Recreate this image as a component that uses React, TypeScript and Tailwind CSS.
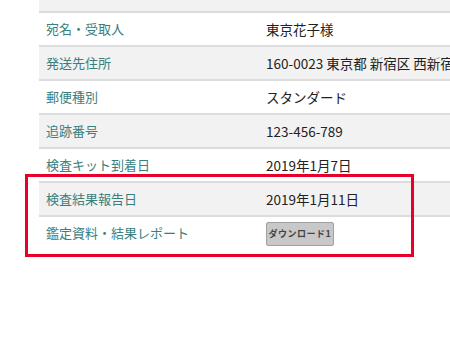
type Row = {
  label: string
  value?: string
  shaded: boolean
}

const rows: Row[] = [
  { label: '宛名・受取人', value: '東京花子様', shaded: false },
  { label: '発送先住所', value: '160-0023 東京都 新宿区 西新宿 1-1-1', shaded: true },
  { label: '郵便種別', value: 'スタンダード', shaded: false },
  { label: '追跡番号', value: '123-456-789', shaded: true },
  { label: '検査キット到着日', value: '2019年1月7日', shaded: false },
  { label: '検査結果報告日', value: '2019年1月11日', shaded: true },
]

const font = { fontFamily: '"Noto Sans CJK JP", "Noto Sans", sans-serif' }

const InfoRow = ({ label, value, shaded }: Row) => (
  <div
    className={`flex border-t-2 border-[#dcdcdc] h-[34px] items-center ${shaded ? 'bg-[#f2f2f2]' : 'bg-white'}`}
  >
    <div className="w-[227px] shrink-0 pl-[7px] text-[13px] text-[#3a7f7e]">{label}</div>
    <div className="whitespace-nowrap text-[13.5px] text-[#222]">{value}</div>
  </div>
)

export default function App() {
  return (
    <div className="relative w-[450px] h-[350px] overflow-hidden bg-white" style={font}>
      <div className="ml-[39px] w-[600px]">
        <div className="h-[11px] bg-[#f2f2f2]" />
        {rows.map((r) => (
          <InfoRow key={r.label} {...r} />
        ))}
        <div className="flex border-t-2 border-[#dcdcdc] pt-[5px] pb-[8px] bg-white">
          <div className="w-[227px] shrink-0 pl-[7px] pt-[2px] text-[13px] leading-[18px] text-[#3a7f7e]">
            鑑定資料・結果レポート
          </div>
          <button className="h-[24px] w-[68px] rounded-[2px] border border-[#a0a0a0] bg-[#c8c8c8] text-[9px] font-bold text-[#444] tracking-[0.5px]">
            ダウンロード1
          </button>
        </div>
      </div>

      {/* highlight frame over the result rows */}
      <div className="absolute left-[25px] top-[174px] w-[389px] h-[83px] border-[3px] border-[#e8002a] pointer-events-none" />
    </div>
  )
}
